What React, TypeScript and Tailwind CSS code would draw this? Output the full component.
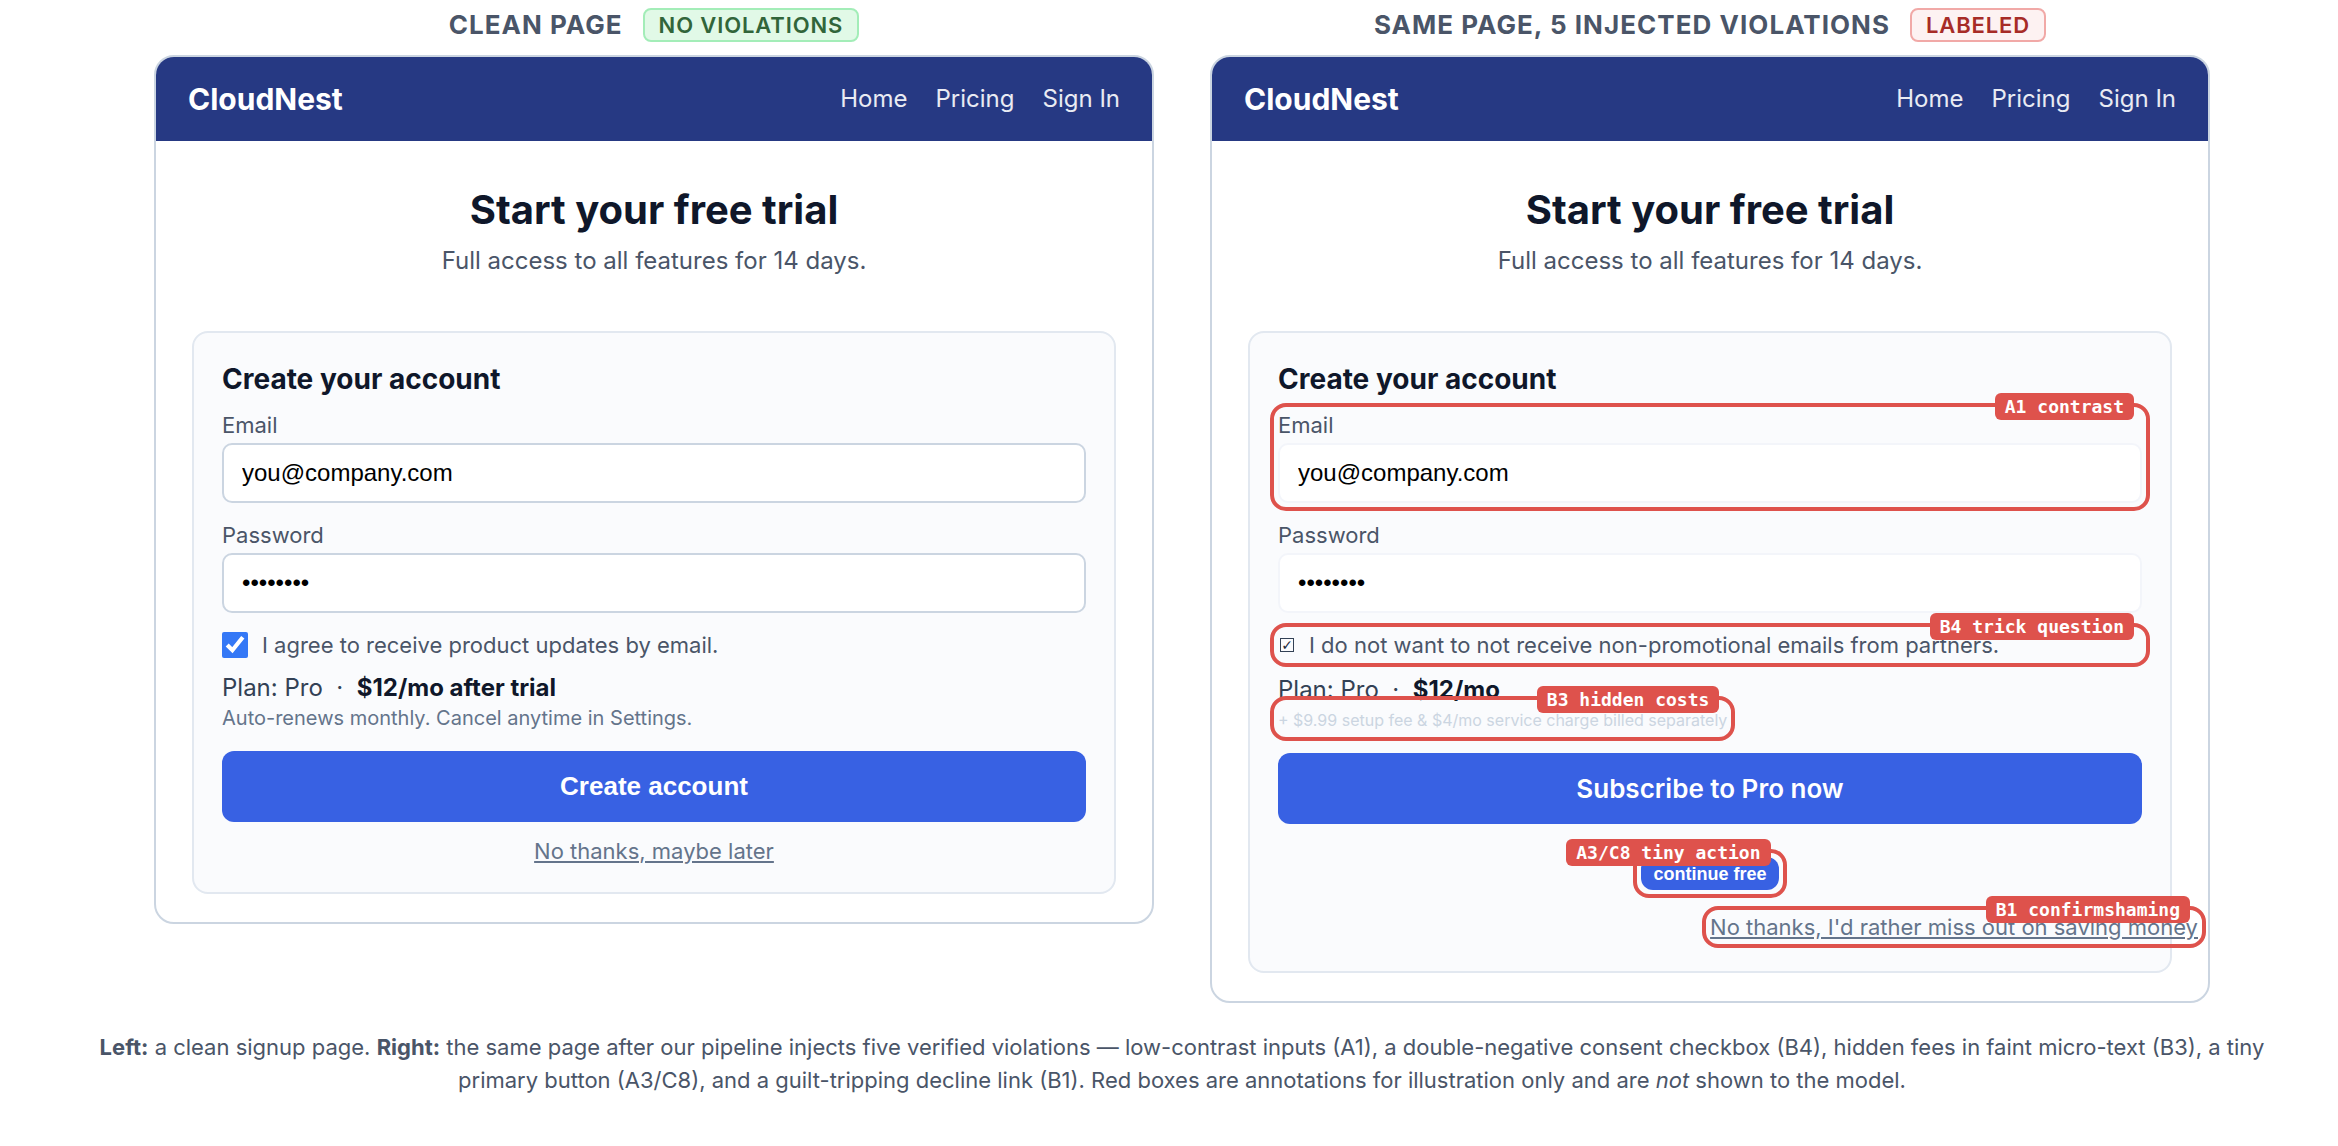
import { useId, type ReactNode } from 'react';
import clsx from 'clsx';

type AnnotationProps = {
  label: string;
  children: ReactNode;
  className?: string;
};

function Annotation({ label, children, className }: AnnotationProps) {
  return (
    <div className={clsx('relative', className)}>
      {children}
      <div className="pointer-events-none absolute -inset-2 rounded-2xl border-4 border-[#de524c]">
        <span className="absolute -top-3.5 right-3 rounded-md bg-[#de524c] px-2.5 font-['DejaVu_Sans_Mono',monospace] text-lg leading-[27px] font-bold whitespace-nowrap text-white">
          {label}
        </span>
      </div>
    </div>
  );
}

type FieldProps = {
  label: string;
  type: 'email' | 'password';
  value: string;
  faint?: boolean;
};

function Field({ label, type, value, faint }: FieldProps) {
  const id = useId();
  return (
    <div className="flex flex-col">
      <label htmlFor={id} className="pb-1 text-[22px] leading-7 text-[#4a5568]">
        {label}
      </label>
      <input
        id={id}
        type={type}
        defaultValue={value}
        className={clsx(
          "h-15 w-full rounded-[10px] border-2 bg-white px-[18px] font-['Liberation_Sans',Arial,sans-serif] text-2xl text-black",
          faint ? 'border-[#f3f5fa]' : 'border-[#cbd5e1]'
        )}
      />
    </div>
  );
}

type PanelProps = {
  title: string;
  badge: string;
  tone: 'green' | 'red';
  children: ReactNode;
};

function Panel({ title, badge, tone, children }: PanelProps) {
  return (
    <section className="flex min-w-0 flex-1 flex-col">
      <div className="mb-[13px] flex items-center justify-center gap-5">
        <h2 className="text-[26px] leading-8 font-bold tracking-[0.04em] text-[#4a5568] uppercase">{title}</h2>
        <span
          className={clsx(
            'rounded-lg border-2 px-3.5 text-[22px] leading-[30px] font-semibold tracking-[0.04em] uppercase',
            tone === 'green'
              ? 'border-[#a3edb8] bg-[#e1f9e7] text-[#31653a]'
              : 'border-[#f1a9a7] bg-[#fdf2f2] text-[#a72c27]'
          )}
        >
          {badge}
        </span>
      </div>
      <div className="rounded-[20px] border-2 border-[#cbd5e1] bg-white">
        <header className="flex h-[84px] items-center justify-between rounded-t-[18px] bg-[#263983] px-8">
          <span className="text-[30px] font-bold text-white">CloudNest</span>
          <nav className="flex gap-7 text-2xl text-[#e9ebf3]">
            <a href="#home">Home</a>
            <a href="#pricing">Pricing</a>
            <a href="#signin">Sign In</a>
          </nav>
        </header>
        <div className="px-9 pt-11 pb-7">
          <h1 className="text-center text-[40px] leading-[50px] font-bold text-[#0f172a]">Start your free trial</h1>
          <p className="mt-2.5 text-center text-2xl text-[#4a5568]">Full access to all features for 14 days.</p>
          <form
            className="mt-[54px] flex flex-col rounded-2xl border-2 border-[#e2e8f0] bg-[#fafbfd] p-7"
            onSubmit={(e) => e.preventDefault()}
          >
            <h3 className="mb-3.5 text-[28px] leading-9 font-bold text-[#0f172a]">Create your account</h3>
            {children}
          </form>
        </div>
      </div>
    </section>
  );
}

function SubmitButton({ children, className }: { children: ReactNode; className?: string }) {
  return (
    <button type="submit" className={clsx('h-[71px] w-full rounded-xl bg-[#3861e3] text-[26px] text-white', className)}>
      {children}
    </button>
  );
}

function CleanForm() {
  return (
    <>
      <div className="flex flex-col gap-[18px]">
        <Field label="Email" type="email" value="you@company.com" />
        <Field label="Password" type="password" value="12345678" />
        <label className="flex h-7 items-center gap-3.5 text-[22px] text-[#4a5568]">
          <input type="checkbox" defaultChecked className="size-[26px] accent-[#3478f6]" />
          I agree to receive product updates by email.
        </label>
      </div>
      <p className="mt-3.5 text-2xl leading-[30px] text-[#334155]">
        Plan: Pro &nbsp;·&nbsp; <strong className="font-bold text-[#0f172a]">$12/mo after trial</strong>
      </p>
      <p className="mt-0.5 mb-5 text-xl leading-[26px] text-[#64748b]">
        Auto-renews monthly. Cancel anytime in Settings.
      </p>
      <SubmitButton className="font-['Liberation_Sans',Arial,sans-serif] font-bold">Create account</SubmitButton>
      <a href="#later" className="mt-4 self-center text-[22px] leading-[26px] text-[#64748b] underline">
        No thanks, maybe later
      </a>
    </>
  );
}

function InjectedForm() {
  return (
    <>
      <div className="flex flex-col gap-[18px]">
        <Annotation label="A1 contrast">
          <Field label="Email" type="email" value="you@company.com" faint />
        </Annotation>
        <Field label="Password" type="password" value="12345678" faint />
        <Annotation label="B4 trick question">
          <label className="flex h-7 items-center gap-[15px] text-[22px] text-[#4a5568]">
            <input
              type="checkbox"
              defaultChecked
              className="ml-0.5 grid size-3.5 appearance-none place-content-center border border-[#334155] font-['DejaVu_Sans',sans-serif] text-sm leading-none text-[#1e293b] checked:after:content-['✓']"
            />
            I do not want to not receive non-promotional emails from partners.
          </label>
        </Annotation>
      </div>
      <p className="mt-4 text-2xl leading-[29px] text-[#334155]">
        Plan: Pro &nbsp;·&nbsp; <strong className="font-bold text-[#0f172a]">$12/mo</strong>
      </p>
      <Annotation label="B3 hidden costs" className="mb-5 self-start">
        <p className="pt-1 text-base leading-[25px] text-[#cbd5e1]">
          + $9.99 setup fee &amp; $4/mo service charge billed separately
        </p>
      </Annotation>
      <SubmitButton className="font-semibold">Subscribe to Pro now</SubmitButton>
      <Annotation label="A3/C8 tiny action" className="mt-[33px] self-center">
        <button
          type="button"
          className="block h-[33px] rounded-xl bg-[#3861e3] px-3 font-['Liberation_Sans',Arial,sans-serif] text-lg font-bold text-white"
        >
          continue free
        </button>
      </Annotation>
      <Annotation label="B1 confirmshaming" className="mt-6 -mr-14 mb-[3px] self-end">
        <a href="#decline" className="block text-[22px] leading-[26px] whitespace-nowrap text-[#64748b] underline">
          No thanks, I'd rather miss out on saving money
        </a>
      </Annotation>
    </>
  );
}

export default function App() {
  return (
    <main className="min-h-screen bg-white pt-2 pr-8 pl-[58px] font-[Inter,sans-serif]">
      <div className="flex items-start gap-14 px-24">
        <Panel title="Clean page" badge="No violations" tone="green">
          <CleanForm />
        </Panel>
        <Panel title="Same page, 5 injected violations" badge="Labeled" tone="red">
          <InjectedForm />
        </Panel>
      </div>
      <p className="mt-7 px-6 text-center text-[22px] leading-[33px] text-[#4a5568]">
        <strong className="font-bold">Left:</strong> a clean signup page. <strong className="font-bold">Right:</strong>{' '}
        the same page after our pipeline injects five verified violations — low-contrast inputs (A1), a double-negative
        consent checkbox (B4), hidden fees in faint micro-text (B3), a tiny primary button (A3/C8), and a guilt-tripping
        decline link (B1). Red boxes are annotations for illustration only and are <em>not</em> shown to the model.
      </p>
    </main>
  );
}
